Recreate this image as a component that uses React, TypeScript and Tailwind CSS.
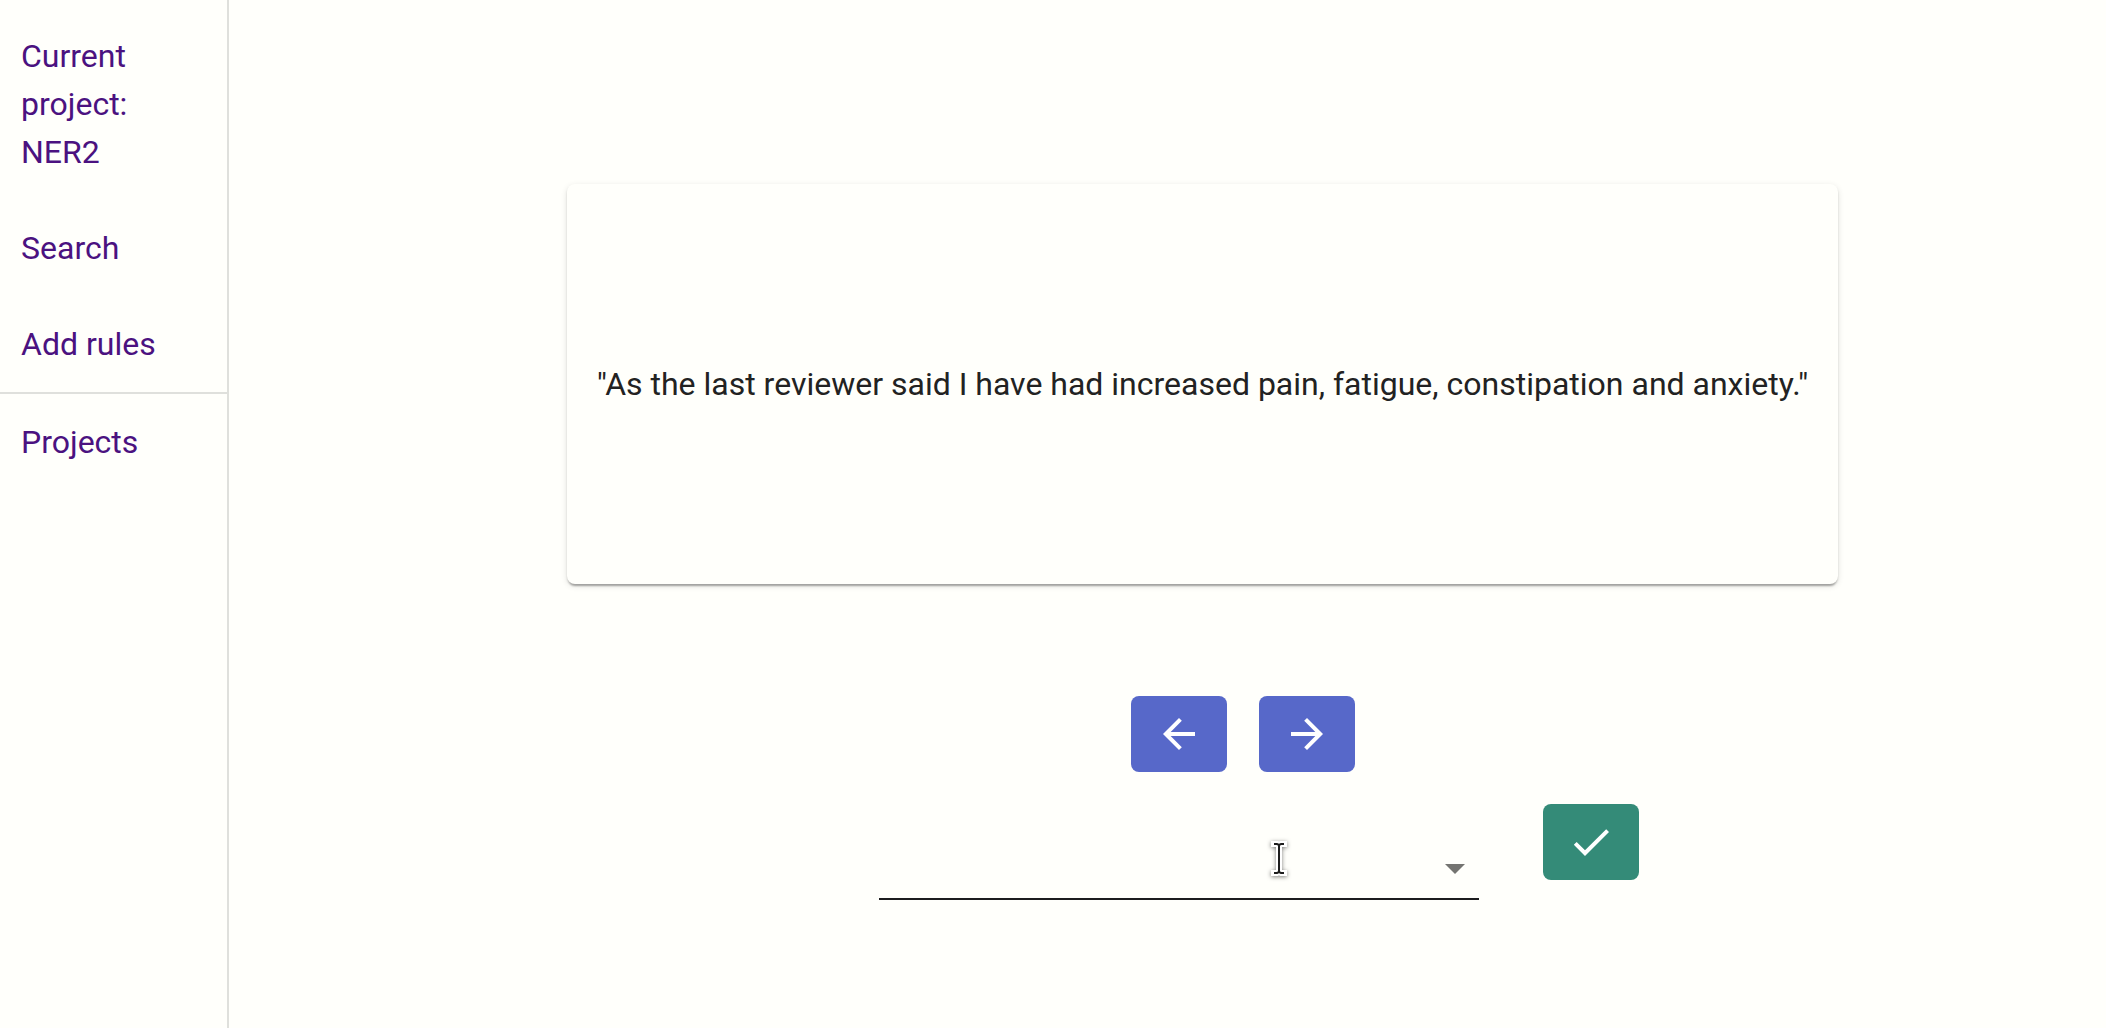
import React from "react";

function NavLink({ children }: { children: React.ReactNode }) {
  return (
    <a href="#" className="block px-[21px] py-6 text-[#4b1280]">
      {children}
    </a>
  );
}

function IconButton({ label, path, className }: { label: string; path: string; className: string }) {
  return (
    <button
      type="button"
      aria-label={label}
      className={`flex w-24 justify-center rounded-lg py-3.5 text-white ${className}`}
    >
      <svg viewBox="0 0 24 24" className="size-12" fill="currentColor" aria-hidden="true">
        <path d={path} />
      </svg>
    </button>
  );
}

export default function App() {
  return (
    <div className="flex min-h-screen bg-[#fffffb] font-[Roboto,sans-serif] text-[32px] leading-[48px] text-[#222222]">
      <nav className="w-[229px] shrink-0 border-r-2 border-[#dfe0dc] pt-2">
        <NavLink>Current project: NER2</NavLink>
        <NavLink>Search</NavLink>
        <NavLink>Add rules</NavLink>
        <hr className="border-t-2 border-[#dfe0dc]" />
        <NavLink>Projects</NavLink>
      </nav>

      <main className="flex grow flex-col items-center pt-[184px] pl-[70px]">
        <section className="flex h-[400px] items-center rounded-lg bg-[#fffffb] px-[30px] shadow-[0_4px_2px_-2px_rgba(0,0,0,0.2),0_2px_2px_0_rgba(0,0,0,0.14),0_2px_6px_0_rgba(0,0,0,0.12)]">
          <p>"As the last reviewer said I have had increased pain, fatigue, constipation and anxiety."</p>
        </section>

        <div className="mt-28 flex gap-8 pl-20">
          <IconButton
            label="Previous"
            className="bg-[#5768c9]"
            path="M20 11H7.83l5.59-5.59L12 4l-8 8 8 8 1.41-1.41L7.83 13H20v-2z"
          />
          <IconButton
            label="Next"
            className="bg-[#5768c9]"
            path="M12 4l-1.41 1.41L16.17 11H4v2h12.17l-5.58 5.59L12 20l8-8z"
          />
        </div>

        <div className="mt-8 flex items-start gap-16 pl-28">
          <div className="relative mt-8 w-[600px]">
            <select
              aria-label="Label"
              defaultValue=""
              className="block h-16 w-full appearance-none border-b-2 border-[#1c1c1e] bg-transparent pr-12 outline-none"
            >
              <option value=""></option>
            </select>
            <svg
              viewBox="0 0 24 24"
              className="pointer-events-none absolute top-2 right-0 size-12 text-[#747471]"
              fill="currentColor"
              aria-hidden="true"
            >
              <path d="M7 10l5 5 5-5z" />
            </svg>
            <svg
              viewBox="0 0 20 38"
              className="pointer-events-none absolute top-1 left-[390px] h-[38px] w-5 drop-shadow-[0_1px_2px_rgba(0,0,0,0.5)]"
              fill="none"
              aria-hidden="true"
            >
              <path d="M5 4h3l2 1 2-1h3M5 33h3l2-1 2 1h3M10 5v27" stroke="white" strokeWidth="6" strokeLinecap="square" />
              <path d="M5 4h3l2 1 2-1h3M5 33h3l2-1 2 1h3M10 5v27" stroke="#1c1c1c" strokeWidth="2" />
            </svg>
          </div>
          <IconButton
            label="Confirm"
            className="bg-[#348b78]"
            path="M9 16.17L4.83 12l-1.42 1.41L9 19 21 7l-1.41-1.41z"
          />
        </div>
      </main>
    </div>
  );
}
